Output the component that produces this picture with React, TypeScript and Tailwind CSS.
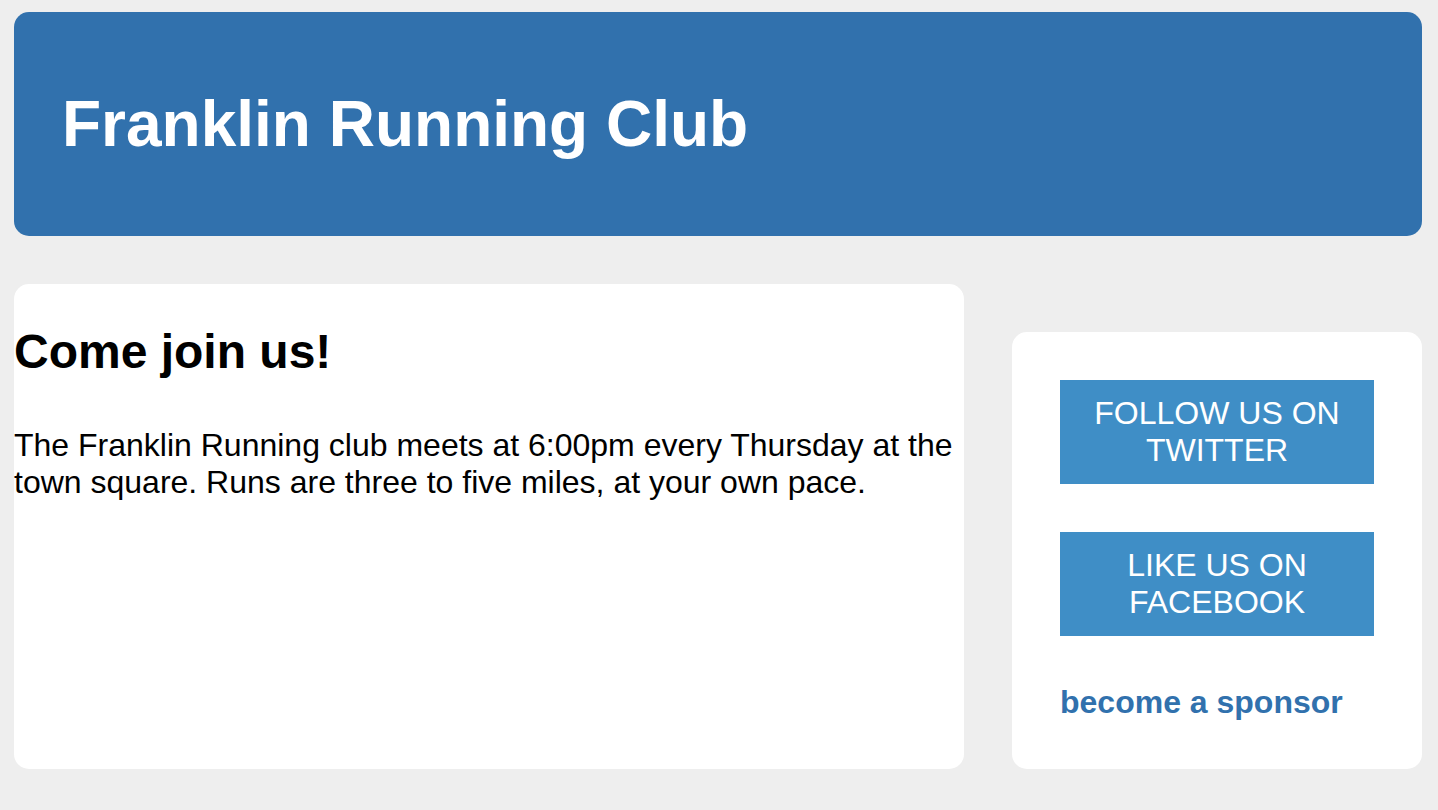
export default function App() {
  return (
    <div className="min-h-screen bg-[#eeeeee] pl-[14px] pr-[16px] pt-[12px] pb-[42px] font-['Liberation_Sans',Arial,sans-serif] text-black">
      <header className="flex h-[224px] items-center rounded-[15px] bg-[#3171ad] pl-[48px]">
        <h1 className="text-[64px] font-bold leading-[normal] text-white">Franklin Running Club</h1>
      </header>

      <div className="mt-12 flex gap-12">
        <main className="flex-1 rounded-[15px] bg-white pt-10">
          <h2 className="text-[48px] font-bold leading-[normal]">Come join us!</h2>
          <p className="mt-12 text-[32px] leading-[normal]">
            The Franklin Running club meets at 6:00pm every Thursday at the town square. Runs are three to five
            miles, at your own pace.
          </p>
        </main>

        <aside className="mt-12 flex w-[410px] flex-col gap-12 rounded-[15px] bg-white p-12">
          <a
            href="#"
            className="block bg-[#3f8ec6] px-4 py-[15px] text-center text-[32px] leading-[normal] text-white"
          >
            FOLLOW US ON TWITTER
          </a>
          <a
            href="#"
            className="block bg-[#3f8ec6] px-4 py-[15px] text-center text-[32px] leading-[normal] text-white"
          >
            LIKE US ON FACEBOOK
          </a>
          <a href="#" className="block text-[32px] font-bold leading-[normal] text-[#3171ad]">
            become a sponsor
          </a>
        </aside>
      </div>
    </div>
  );
}
